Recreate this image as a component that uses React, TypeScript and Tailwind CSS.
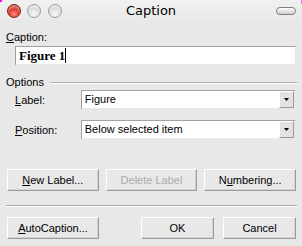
import React from "react";

const sans = { fontFamily: '"Liberation Sans", Arial, sans-serif' };

function Btn({ children, w, disabled }: { children: React.ReactNode; w: string; disabled?: boolean }) {
  return (
    <div
      className={`${w} h-[22px] flex items-center justify-center border-t border-l border-t-white border-l-white border-r border-b border-r-[#9c9c9c] border-b-[#9c9c9c] shadow-[inset_-1px_-1px_0_#d2d2d2] text-[11px] leading-[13px] ${disabled ? "text-[#ababab]" : "text-black"}`}
    >
      {children}
    </div>
  );
}

function Arrow() {
  return (
    <svg width="5" height="3" viewBox="0 0 5 3">
      <polygon points="0,0 5,0 2.5,3" fill="#000" />
    </svg>
  );
}

function Dropdown({ text }: { text: string }) {
  return (
    <div className="w-[216px] h-[20px] flex border-t border-l border-[#a3a3a3] border-r-2 border-b-2 border-r-[#e8e8e8] border-b-[#e8e8e8] bg-white">
      <div className="flex-1 flex items-center pl-[3px] text-[11px] leading-[13px] text-black">{text}</div>
      <div className="w-[15px] h-full flex items-center justify-center bg-[#e2e2e2] border-t border-l border-t-white border-l-white border-r border-b border-r-[#9a9a9a] border-b-[#9a9a9a]">
        <Arrow />
      </div>
    </div>
  );
}

export default function App() {
  return (
    <div className="relative w-[302px] h-[246px] overflow-hidden bg-[#e8e8e8]" style={sans}>
      <div className="absolute left-0 top-0 w-[2px] h-[2px] bg-[#ff00ff]" />
      <div className="absolute right-0 top-0 w-[1px] h-[4px] bg-[#ff66ff]" />
      {/* title bar */}
      <div className="h-[22px] grid grid-cols-[1fr_auto_1fr] items-center bg-[linear-gradient(#f1f1f1,#e8e8e8)]">
        <div className="flex items-center pl-[7px] gap-[6px]">
          <div className="w-[14px] h-[14px] rounded-full border border-[#7b1d16] bg-[radial-gradient(circle_at_50%_75%,#ff8a7a_0%,#e2443a_40%,#b0231a_100%)] shadow-[inset_0_2px_2px_rgba(255,255,255,0.5)]" />
          <div className="w-[14px] h-[14px] rounded-full border border-[#9d9d9d] bg-[radial-gradient(circle_at_50%_75%,#fbfbfb_0%,#dcdcdc_50%,#bdbdbd_100%)] shadow-[inset_0_2px_2px_rgba(255,255,255,0.7)]" />
          <div className="w-[14px] h-[14px] ml-[1px] rounded-full border border-[#9d9d9d] bg-[radial-gradient(circle_at_50%_75%,#fbfbfb_0%,#dcdcdc_50%,#bdbdbd_100%)] shadow-[inset_0_2px_2px_rgba(255,255,255,0.7)]" />
        </div>
        <div className="text-[13px] leading-[16px] text-black" style={{ fontFamily: '"DejaVu Sans", sans-serif' }}>
          Caption
        </div>
        <div className="flex justify-end pr-[6px]">
          <div className="w-[20px] h-[8px] rounded-full border border-[#7e7e7e] bg-[linear-gradient(#fdfdfd,#cfcfcf)]" />
        </div>
      </div>

      <div className="px-[6px] flex flex-col">
        <div className="mt-[9px] text-[11px] leading-[13px] text-black">
          <u>C</u>aption:
        </div>
        <div className="mt-[2px] ml-[9px] w-[282px] h-[20px] flex items-center border-t border-l border-[#a0a0a0] border-r-2 border-b-2 border-r-[#e8e8e8] border-b-[#e8e8e8] bg-white pl-[3px]">
          <span className="text-[13px] leading-[15px] font-bold text-black" style={{ fontFamily: '"Liberation Serif", "Times New Roman", serif' }}>
            Figure 1
          </span>
          <span className="inline-block w-px h-[15px] bg-black ml-[0px]" />
        </div>

        <div className="mt-[10px] flex items-center h-[13px]">
          <span className="text-[11px] leading-[13px] text-black">Options</span>
          <div className="ml-[7px] flex-1 mr-[-1px] border-t border-[#ababab] border-b border-b-white" />
        </div>

        <div className="mt-[1px] ml-[9px] flex items-center">
          <div className="w-[66px] text-[11px] leading-[13px] text-black">
            <u>L</u>abel:
          </div>
          <Dropdown text="Figure" />
        </div>
        <div className="mt-[10px] ml-[9px] flex items-center">
          <div className="w-[66px] text-[11px] leading-[13px] text-black">
            <u>P</u>osition:
          </div>
          <Dropdown text="Below selected item" />
        </div>

        <div className="mt-[29px] ml-[1px] flex gap-[7px]">
          <Btn w="w-[92px]">
            <span><u>N</u>ew Label...</span>
          </Btn>
          <Btn w="w-[92px]" disabled>
            <span>Delete Label</span>
          </Btn>
          <Btn w="w-[92px]">
            <span>N<u>u</u>mbering...</span>
          </Btn>
        </div>

        <div className="mt-[14px] mr-[-1px] border-t border-[#ababab] border-b border-b-white" />

        <div className="mt-[10px] ml-[1px] flex">
          <Btn w="w-[92px]">
            <span><u>A</u>utoCaption...</span>
          </Btn>
          <div className="flex-1" />
          <Btn w="w-[73px]">
            <span>OK</span>
          </Btn>
          <div className="w-[9px]" />
          <Btn w="w-[73px]">
            <span>Cancel</span>
          </Btn>
        </div>
      </div>
    </div>
  );
}
